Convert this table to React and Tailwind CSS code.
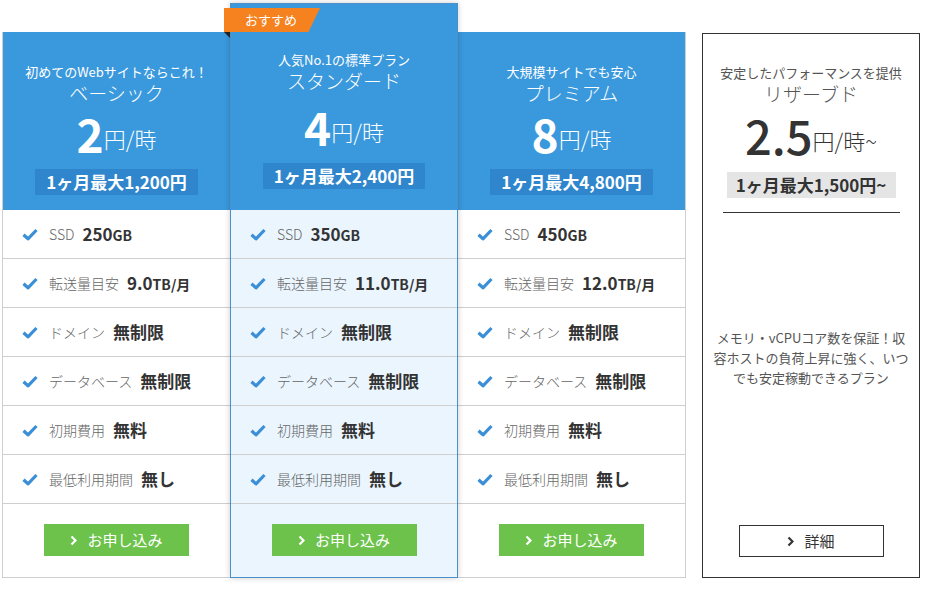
import React from 'react';

const plans = [
  {
    key: 'basic',
    sub: '初めてのWebサイトならこれ！',
    name: 'ベーシック',
    price: '2',
    monthly: '1,200',
    ssd: '250',
    transfer: '9.0',
  },
  {
    key: 'standard',
    sub: '人気No.1の標準プラン',
    name: 'スタンダード',
    price: '4',
    monthly: '2,400',
    ssd: '350',
    transfer: '11.0',
    featured: true,
  },
  {
    key: 'premium',
    sub: '大規模サイトでも安心',
    name: 'プレミアム',
    price: '8',
    monthly: '4,800',
    ssd: '450',
    transfer: '12.0',
  },
];

function Check() {
  return (
    <svg width="16" height="13" viewBox="0 0 16 13" className="shrink-0">
      <path d="M1.5 6.8 L6 10.8 L14.5 2" fill="none" stroke="#3a8fd6" strokeWidth="3.2" strokeLinejoin="round" />
    </svg>
  );
}

function Chevron({ color = '#fff' }) {
  return (
    <svg width="7" height="11" viewBox="0 0 7 11" className="shrink-0">
      <path d="M1.5 1.5 L5.5 5.5 L1.5 9.5" fill="none" stroke={color} strokeWidth="2.2" />
    </svg>
  );
}

function Row({ label, children }) {
  return (
    <div className="h-[49px] border-b border-[#cfcfcf] flex items-center pl-[19px]">
      <Check />
      <span className="ml-[11px] text-[14px] font-light text-[#666]">{label}</span>
      <span className="ml-[8px] text-[17px] font-bold text-[#333]">{children}</span>
    </div>
  );
}

function PlanCard({ plan }) {
  const f = plan.featured;
  return (
    <div
      className={
        f
          ? 'relative z-10 w-[228px] flex flex-col border border-[#4b90c9] bg-[#eaf5fe] shadow-[0_0_6px_rgba(0,0,0,0.2)]'
          : 'w-[228px] mt-[29px] flex flex-col bg-white border-b border-[#cfcfcf] ' +
            (plan.key === 'basic' ? 'border-l' : 'border-r')
      }
    >
      {f && (
        <div className="absolute left-[-7px] top-[4px]">
          <div className="h-[24px] w-[96px] bg-[#f5821f] text-white text-[13px] leading-[24px] pl-[21px] [clip-path:polygon(0_0,100%_0,88%_100%,0_100%)]">
            おすすめ
          </div>
          <div className="w-0 h-0 border-t-[6px] border-t-[#222] border-l-[6px] border-l-transparent" />
        </div>
      )}
      <div
        className={
          'bg-[#3a98dc] text-white flex flex-col items-center ' +
          (f ? 'h-[206px] pt-[47px]' : 'h-[178px] pt-[31px]')
        }
      >
        <div className="text-[13px] leading-[18px]">{plan.sub}</div>
        <div className="text-[19px] leading-[24px] font-light">{plan.name}</div>
        <div className={'flex items-center h-[48px] ' + (f ? 'mt-[9px]' : 'mt-[4px]')}>
          <span className="text-[46px] leading-[36px] font-semibold">{plan.price}</span>
          <span className="text-[22px] leading-[24px] font-light mt-[10px]">円/時</span>
        </div>
        <div className={'bg-[#2f86cc] px-[11px] h-[26px] leading-[26px] text-[17px] font-bold ' + (f ? 'mt-[13px]' : 'mt-[12px]')}>
          1ヶ月最大{plan.monthly}円
        </div>
      </div>
      <Row label="SSD">
        {plan.ssd}
        <span className="text-[14px]">GB</span>
      </Row>
      <Row label="転送量目安">
        {plan.transfer}
        <span className="text-[14px]">TB/月</span>
      </Row>
      <Row label="ドメイン">無制限</Row>
      <Row label="データベース">無制限</Row>
      <Row label="初期費用">無料</Row>
      <Row label="最低利用期間">無し</Row>
      <div className="flex-1 flex justify-center pt-[20px]">
        <button className="w-[145px] h-[32px] bg-[#6cc24a] text-white text-[15px] flex items-center justify-center gap-[10px]">
          <Chevron />
          お申し込み
        </button>
      </div>
    </div>
  );
}

export default function App() {
  return (
    <div
      className="w-[932px] h-[589px] bg-white pl-[2px] pt-[3px] flex items-start"
      style={{ fontFamily: '"Noto Sans CJK JP", "Noto Sans", sans-serif' }}
    >
      <div className="flex h-[575px]">
        {plans.map((p) => (
          <PlanCard key={p.key} plan={p} />
        ))}
      </div>
      <div className="ml-[16px] mt-[30px] w-[218px] h-[545px] border border-[#333] flex flex-col items-center text-[#333]">
        <div className="mt-[30px] text-[13px] leading-[18px] text-[#555]">安定したパフォーマンスを提供</div>
        <div className="text-[19px] leading-[24px] font-light text-[#555]">リザーブド</div>
        <div className="flex items-center h-[48px] mt-[5px]">
          <span className="text-[47px] leading-[36px] font-medium">2.5</span>
          <span className="text-[22px] leading-[24px] font-light mt-[10px]">円/時~</span>
        </div>
        <div className="mt-[13px] bg-[#e5e5e5] w-[169px] h-[26px] leading-[26px] text-center text-[17px] font-bold">
          1ヶ月最大1,500円~
        </div>
        <div className="mt-[14px] w-[177px] border-t border-[#333]" />
        <div className="mt-[115px] text-[13px] leading-[20px] text-[#555] text-center">
          メモリ・vCPUコア数を保証！収
          <br />
          容ホストの負荷上昇に強く、いつ
          <br />
          でも安定稼動できるプラン
        </div>
        <div className="flex-1" />
        <button className="mb-[20px] w-[145px] h-[32px] border border-[#333] bg-white text-[15px] flex items-center justify-center gap-[10px]">
          <Chevron color="#333" />
          詳細
        </button>
      </div>
    </div>
  );
}
